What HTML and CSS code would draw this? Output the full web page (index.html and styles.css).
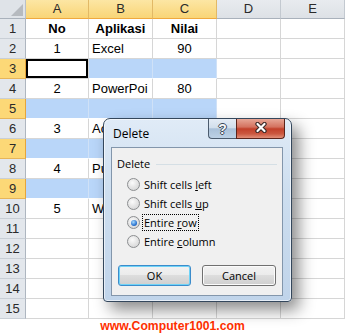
FILE: index.html
```html
<!DOCTYPE html>
<html lang="en">
<head>
    <meta charset="UTF-8">
    <title>Delete rows</title>
    <link rel="stylesheet" href="styles.css">
</head>
<body>
    <div class="sheet">
        <div class="grid">
            <div class="corner"><span class="tri"></span></div>
            <div class="ch on">A</div>
            <div class="ch on">B</div>
            <div class="ch on">C</div>
            <div class="ch">D</div>
            <div class="ch">E</div>

            <div class="rh">1</div>
            <div class="ctr b">No</div>
            <div class="ctr b">Aplikasi</div>
            <div class="ctr b">Nilai</div>
            <div></div><div></div>

            <div class="rh">2</div>
            <div class="ctr">1</div>
            <div class="c">Excel</div>
            <div class="ctr">90</div>
            <div></div><div></div>

            <div class="rh on">3</div>
            <div class="act"></div>
            <div class="sel"></div>
            <div class="sel"></div>
            <div></div><div></div>

            <div class="rh">4</div>
            <div class="ctr">2</div>
            <div class="c">PowerPoi</div>
            <div class="ctr">80</div>
            <div></div><div></div>

            <div class="rh on">5</div>
            <div class="sel"></div>
            <div class="sel"></div>
            <div class="sel"></div>
            <div></div><div></div>

            <div class="rh">6</div>
            <div class="ctr">3</div>
            <div class="c">Ac</div>
            <div></div>
            <div></div><div></div>

            <div class="rh on">7</div>
            <div class="sel"></div>
            <div class="sel"></div>
            <div class="sel"></div>
            <div></div><div></div>

            <div class="rh">8</div>
            <div class="ctr">4</div>
            <div class="c">Pu</div>
            <div></div>
            <div></div><div></div>

            <div class="rh on">9</div>
            <div class="sel"></div>
            <div class="sel"></div>
            <div class="sel"></div>
            <div></div><div></div>

            <div class="rh">10</div>
            <div class="ctr">5</div>
            <div class="c">W</div>
            <div></div>
            <div></div><div></div>

            <div class="rh">11</div><div></div><div></div><div></div><div></div><div></div>
            <div class="rh">12</div><div></div><div></div><div></div><div></div><div></div>
            <div class="rh">13</div><div></div><div></div><div></div><div></div><div></div>
            <div class="rh">14</div><div></div><div></div><div></div><div></div><div></div>
            <div class="rh">15</div><div></div><div></div><div></div><div></div><div></div>
        </div>

        <!-- Delete dialog -->
        <div class="dlg">
            <div class="dlg-top">
                <span class="dlg-title">Delete</span>
                <div class="caption-btns">
                    <span class="cap help">?</span>
                    <span class="cap close">
                        <svg width="14" height="11" viewBox="0 0 14 11">
                            <path d="M3.5 2 L10.5 9 M10.5 2 L3.5 9" stroke="#3b2b29" stroke-width="4.4" stroke-linecap="round" fill="none"/>
                            <path d="M3.5 2 L10.5 9 M10.5 2 L3.5 9" stroke="#ffffff" stroke-width="2.2" stroke-linecap="round" fill="none"/>
                        </svg>
                    </span>
                </div>
            </div>
            <div class="client">
                <div class="legend"><span>Delete</span><i class="rule"></i></div>
                <div class="opts">
                    <div class="opt"><span class="radio"></span><span class="lbl">Shift cells <u>l</u>eft</span></div>
                    <div class="opt"><span class="radio"></span><span class="lbl">Shift cells <u>u</u>p</span></div>
                    <div class="opt"><span class="radio checked"></span><span class="lbl focus">Entire <u>r</u>ow</span></div>
                    <div class="opt"><span class="radio"></span><span class="lbl">Entire <u>c</u>olumn</span></div>
                </div>
                <div class="actions">
                    <button class="btn def">OK</button>
                    <button class="btn cancel">Cancel</button>
                </div>
            </div>
        </div>
    </div>
    <div class="brand">www.Computer1001.com</div>
</body>
</html>
```

FILE: styles.css
```css
body {
    margin: 0;
    background-color: #ffffff;
    font-family: "Liberation Sans", Arial, sans-serif;
    color: #000;
}

.sheet {
    position: relative;
    width: 345px;
}

.grid {
    display: grid;
    grid-template-columns: 26px 63px 64px 64px 64px 64px;
    grid-template-rows: 19px;
    grid-auto-rows: 20px;
    font-size: 13px;
}

.grid > div {
    box-sizing: border-box;
    border-right: 1px solid #d6d6d6;
    border-bottom: 1px solid #d6d6d6;
    overflow: hidden;
    white-space: nowrap;
    line-height: 20px;
}

.corner {
    background: #dfe3e8;
    display: flex;
    justify-content: flex-end;
    align-items: flex-end;
    padding: 0 2px 2px 0;
    border-right-color: #b9c0c8 !important;
    border-bottom-color: #a9b1bb !important;
}

.tri {
    width: 0;
    height: 0;
    border-left: 12px solid transparent;
    border-bottom: 12px solid #b6babf;
}

/* column headers */
.ch {
    background: linear-gradient(#e8ebef, #dde1e6);
    text-align: center;
    color: #2a2a2a;
    line-height: 18px !important;
    border-right-color: #c3c9d0 !important;
    border-bottom-color: #a9b1bb !important;
}

.ch.on {
    background: linear-gradient(#fce6a4, #f9d577);
    border-right-color: #e2b966 !important;
    border-bottom-color: #f0a93e !important;
}

/* row headers */
.rh {
    background: #e3e7ec;
    text-align: center;
    color: #2a2a2a;
    border-right-color: #aeb6c0 !important;
    border-bottom-color: #c9cfd6 !important;
}

.rh.on {
    background: #fcd877;
    border-right-color: #e6a53a !important;
    border-bottom-color: #e7b559 !important;
}

.c {
    padding: 0 3px;
}

.ctr {
    text-align: center;
}

.b {
    font-weight: bold;
}

.sel {
    background: #b9d6f9;
    border-right-color: #cfe1f7 !important;
    border-bottom-color: #ffffff !important;
}

.act {
    background: #ffffff;
    box-shadow: inset 0 0 0 2px #000;
}

/* dialog */
.dlg {
    position: absolute;
    left: 103px;
    top: 118px;
    width: 189px;
    height: 184px;
    box-sizing: border-box;
    border: 1px solid #34475c;
    border-radius: 7px 7px 4px 4px;
    background: linear-gradient(#e0ebf7, #cddeef 40%, #c0d4ea);
    box-shadow: 7px 8px 16px rgba(0, 0, 0, 0.45), inset 0 0 0 1px rgba(255, 255, 255, 0.6);
    display: flex;
    flex-direction: column;
    font-family: "Open Sans", "Liberation Sans", sans-serif;
    font-size: 11px;
}

.dlg-top {
    height: 28px;
    display: flex;
    align-items: flex-start;
}

.dlg-title {
    flex: 1;
    padding-left: 9px;
    line-height: 29px;
    font-size: 12px;
}

.caption-btns {
    display: flex;
    margin-right: 6px;
}

.cap {
    height: 20px;
    box-sizing: border-box;
    border: 1px solid #4b5b6e;
    border-top: none;
    display: flex;
    align-items: center;
    justify-content: center;
}

.help {
    width: 28px;
    border-right: none;
    border-radius: 0 0 0 4px;
    background: linear-gradient(#e4ecf5, #d2dfec 45%, #aac1d9 52%, #bdd1e5);
    font-family: "Liberation Sans", sans-serif;
    font-weight: bold;
    font-size: 14px;
    color: #f4f6f8;
    text-shadow: 1px 0 0 #3d4a58, -1px 0 0 #3d4a58, 0 1px 0 #3d4a58, 0 -1px 0 #3d4a58;
}

.close {
    width: 49px;
    border-color: #5b241b;
    border-radius: 0 0 4px 0;
    background: linear-gradient(#e7a696, #d4725f 42%, #c2402a 52%, #cb5840 78%, #e2907a);
}

.close svg {
    margin-top: -2px;
}

.client {
    flex: 1;
    margin: 0 8px 5px 7px;
    border: 1px solid #8396ab;
    background: #f0f0f0;
    padding-top: 7px;
}

.legend {
    display: flex;
    align-items: center;
    height: 16px;
    padding-left: 5px;
}

.rule {
    flex: 1;
    height: 1px;
    background: #d5dfe5;
    margin: 3px 5px 0 6px;
}

.opts {
    margin-top: 4px;
}

.opt {
    height: 19px;
    display: flex;
    align-items: center;
    padding-left: 15px;
}

.radio {
    width: 13px;
    height: 13px;
    box-sizing: border-box;
    border-radius: 50%;
    border: 1px solid #8c8e90;
    background: radial-gradient(circle at 40% 35%, #fbfbfb, #e6e6e6 45%, #cfd0d1);
    margin-right: 2px;
    display: flex;
    align-items: center;
    justify-content: center;
}

.radio.checked::after {
    content: "";
    width: 6px;
    height: 6px;
    border-radius: 50%;
    background: radial-gradient(circle at 40% 35%, #a8dcff, #2b74d0 60%, #134d9e);
}

.lbl {
    border: 1px dotted transparent;
    padding: 0 1px;
    line-height: 15px;
}

.lbl.focus {
    border-color: #000;
}

.actions {
    display: flex;
    gap: 11px;
    padding-left: 6px;
    margin-top: 14px;
}

.btn {
    width: 73px;
    height: 21px;
    padding: 0;
    border: 1px solid #707070;
    border-radius: 3px;
    background: linear-gradient(#f2f2f2, #ebebeb 50%, #dddddd 50%, #cfcfcf);
    box-shadow: inset 0 0 0 1px #fbfbfb;
    font: inherit;
    color: #000;
}

.btn.cancel {
    width: 74px;
}

.btn.def {
    border-color: #3c8ccb;
    box-shadow: inset 0 0 0 1px #6fd3f7;
}

.brand {
    text-align: center;
    font-weight: bold;
    font-size: 12.2px;
    line-height: 14px;
    color: #ff3000;
}
```
